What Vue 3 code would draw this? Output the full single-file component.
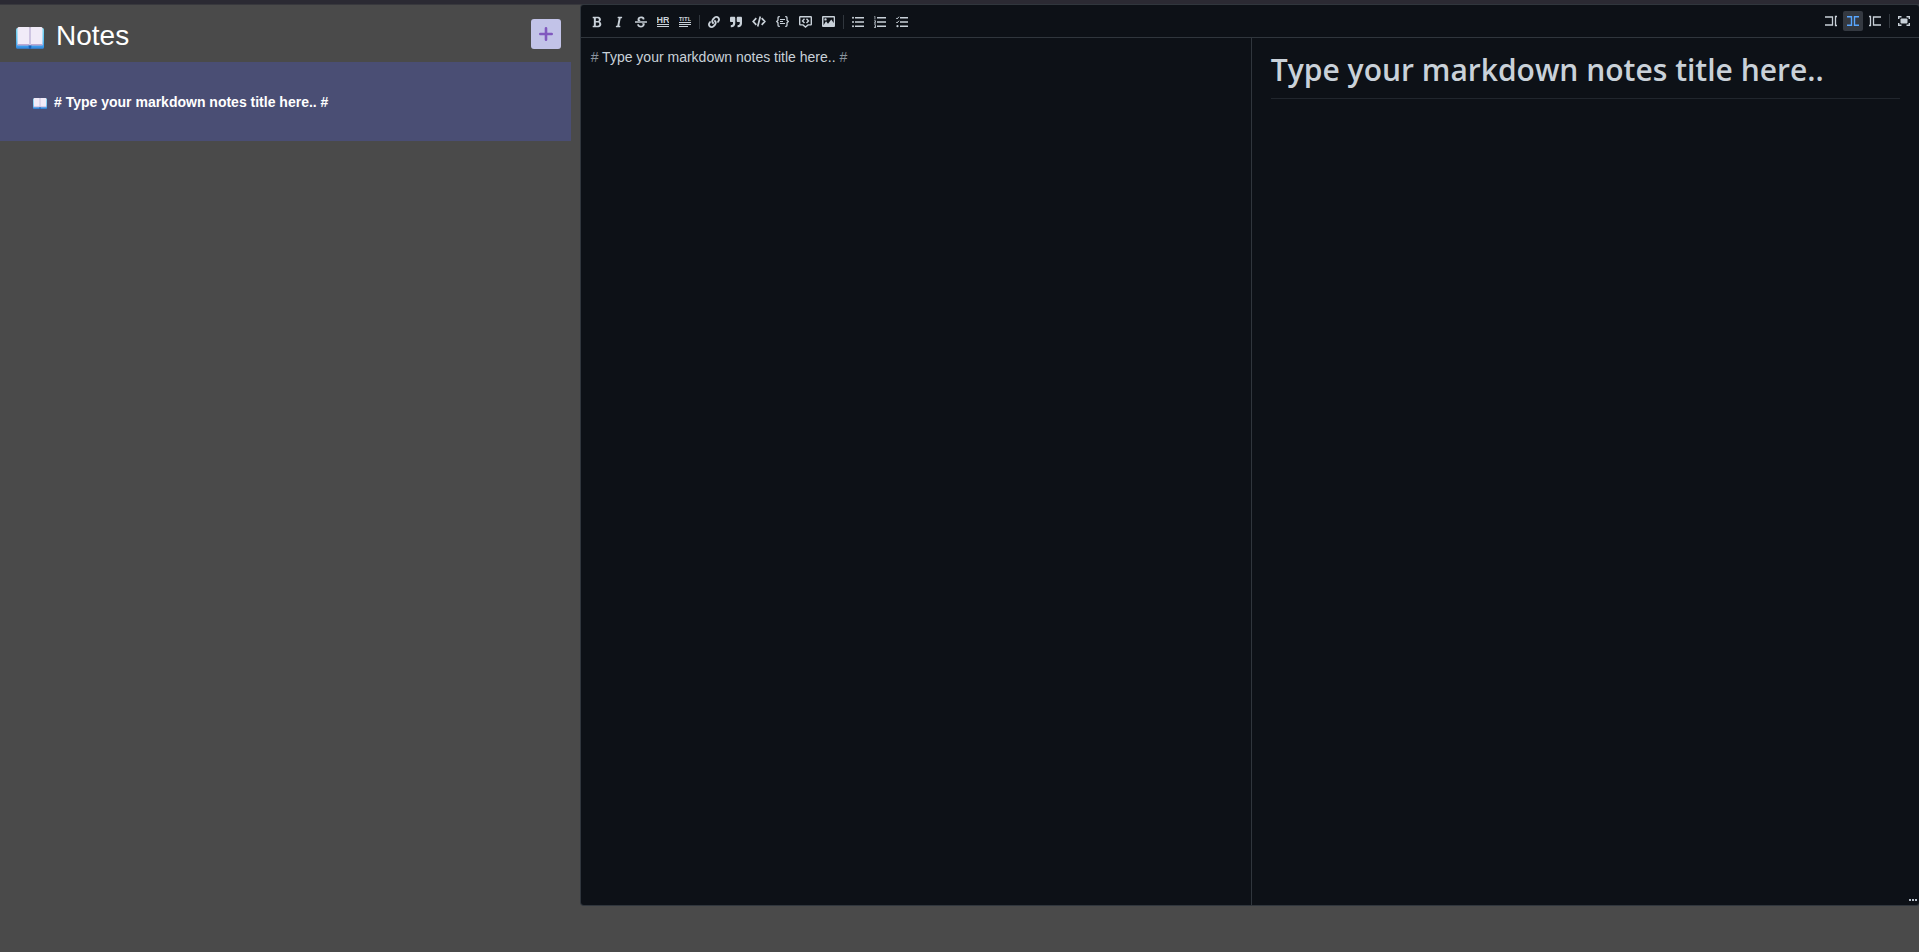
<script setup>
import { ref, computed } from 'vue'

const notes = ref([{ id: 1, body: '# Type your markdown notes title here.. #' }])
const currentId = ref(1)
const mode = ref('live')
const current = computed(() => notes.value.find((n) => n.id === currentId.value))
const heading = computed(() => current.value.body.replace(/^#\s*|\s*#\s*$/g, ''))
const parts = computed(() => current.value.body.split(/(#)/).filter((p) => p !== ''))

function addNote() {
  const id = notes.value.length + 1
  notes.value.push({ id, body: '# Type your markdown notes title here.. #' })
  currentId.value = id
}

const bold = 'M304.793 243.891c33.639-18.537 53.657-54.16 53.657-95.693 0-48.236-26.25-87.626-68.626-104.179C265.138 34.01 240.849 32 209.661 32H24c-8.837 0-16 7.163-16 16v33.049c0 8.837 7.163 16 16 16h33.113v318.53H24c-8.837 0-16 7.163-16 16V464c0 8.837 7.163 16 16 16h195.69c24.203 0 44.834-1.289 66.866-7.584C337.52 457.193 376 410.647 376 350.014c0-52.168-26.573-91.684-71.207-106.123zM142.217 100.809h67.444c16.294 0 27.536 2.019 37.525 6.717 15.828 8.479 24.906 26.502 24.906 49.446 0 35.029-20.32 56.79-53.029 56.79h-76.846V100.809zm112.642 305.475c-10.14 4.056-22.677 4.907-31.409 4.907h-81.233V281.943h84.367c39.645 0 63.057 25.38 63.057 63.057.001 28.425-13.66 52.483-34.782 61.284z'
const italic = 'M204.758 416h-33.849l62.092-320h40.725a16 16 0 0 0 15.704-12.937l6.242-32C297.599 41.184 290.034 32 279.968 32H120.235a16 16 0 0 0-15.704 12.937l-6.242 32C96.362 86.816 103.927 96 113.993 96h33.846l-62.09 320H46.278a16 16 0 0 0-15.704 12.935l-6.245 32C22.402 470.815 29.967 480 40.034 480h158.479a16 16 0 0 0 15.704-12.935l6.245-32c1.927-9.88-5.638-19.065-15.704-19.065z'
const strike = 'M496 288H16c-8.837 0-16-7.163-16-16v-32c0-8.837 7.163-16 16-16h480c8.837 0 16 7.163 16 16v32c0 8.837-7.163 16-16 16zm-214.666 16c27.258 12.937 46.524 28.683 46.524 56.243 0 33.108-28.977 53.676-75.621 53.676-32.325 0-76.874-12.08-76.874-44.271V368c0-8.837-7.164-16-16-16H113.75c-8.836 0-16 7.163-16 16v19.204c0 66.845 77.717 101.82 154.487 101.82 88.578 0 162.013-45.438 162.013-134.424 0-19.815-3.618-36.417-10.143-50.6H281.334zm-30.952-96c-32.422-13.505-56.836-28.946-56.836-59.683 0-33.92 30.901-47.406 64.962-47.406 42.647 0 64.962 16.593 64.962 32.985V136c0 8.837 7.163 16 16 16h45.613c8.836 0 16-7.163 16-16v-30.318c0-52.438-71.725-79.875-142.575-79.875-85.203 0-150.726 40.972-150.726 125.646 0 22.71 4.665 41.176 12.777 56.547h129.823z'
const link = 'M326.612 185.391c59.747 59.809 58.927 155.698.36 214.59-.11.12-.24.25-.36.37l-67.2 67.2c-59.27 59.27-155.699 59.262-214.96 0-59.27-59.26-59.27-155.7 0-214.96l37.106-37.106c9.84-9.84 26.786-3.3 27.294 10.606.648 17.722 3.826 35.527 9.69 52.721 1.986 5.822.567 12.262-3.783 16.612l-13.087 13.087c-28.026 28.026-28.905 73.66-1.155 101.96 28.024 28.579 74.086 28.749 102.325.51l67.2-67.19c28.191-28.191 28.073-73.757 0-101.83-3.701-3.694-7.429-6.564-10.341-8.569a16.037 16.037 0 0 1-6.947-12.606c-.396-10.567 3.348-21.456 11.698-29.806l21.054-21.055c5.521-5.521 14.182-6.199 20.584-1.731a152.482 152.482 0 0 1 20.522 17.197zM467.547 44.449c-59.261-59.262-155.69-59.27-214.96 0l-67.2 67.2c-.12.12-.25.25-.36.37-58.566 58.892-59.387 154.781.36 214.59a152.454 152.454 0 0 0 20.521 17.196c6.402 4.468 15.064 3.789 20.584-1.731l21.054-21.055c8.35-8.35 12.094-19.239 11.698-29.806a16.037 16.037 0 0 0-6.947-12.606c-2.912-2.005-6.64-4.875-10.341-8.569-28.073-28.073-28.191-73.639 0-101.83l67.2-67.19c28.239-28.239 74.3-28.069 102.325.51 27.75 28.3 26.872 73.934-1.155 101.96l-13.087 13.087c-4.35 4.35-5.769 10.79-3.783 16.612 5.864 17.194 9.042 34.999 9.69 52.721.509 13.906 17.454 20.446 27.294 10.606l37.106-37.106c59.271-59.259 59.271-155.699.001-214.959z'
const quote = 'M464 32H336c-26.5 0-48 21.5-48 48v128c0 26.5 21.5 48 48 48h80v64c0 35.3-28.7 64-64 64h-8c-13.3 0-24 10.7-24 24v48c0 13.3 10.7 24 24 24h8c88.4 0 160-71.6 160-160V80c0-26.5-21.5-48-48-48zm-288 0H48C21.5 32 0 53.5 0 80v128c0 26.5 21.5 48 48 48h80v64c0 35.3-28.7 64-64 64h-8c-13.3 0-24 10.7-24 24v48c0 13.3 10.7 24 24 24h8c88.4 0 160-71.6 160-160V80c0-26.5-21.5-48-48-48z'
</script>

<template>
  <div class="app">
    <svg class="defs" width="0" height="0" aria-hidden="true">
      <defs>
        <linearGradient id="cover" x1="0" y1="0" x2="0" y2="1">
          <stop offset="0" stop-color="#7fd6ee" />
          <stop offset="0.6" stop-color="#5cc0f2" />
          <stop offset="1" stop-color="#2f8fe8" />
        </linearGradient>
        <symbol id="book" viewBox="0 0 28 22">
          <rect x="0" y="1" width="28" height="20.5" rx="1.5" fill="url(#cover)" />
          <rect x="0.5" y="20.5" width="27" height="1" rx="0.5" fill="#3a86dc" />
          <path d="M1.5 1.2Q1.5 0 3 0H12.5Q14 0 14 1.2Q14 0 15.500 0H25Q26.500 0 26.500 1.200V18H1.500z" fill="#f1ebf8" />
          <path d="M1.500 17H26.500V18.600H1.500z" fill="#bcaad4" />
          <path d="M13 .5H15V18H13z" fill="#d8cfe8" />
          <path d="M13.700 .5H14.300V18H13.700z" fill="#b9add2" />
          <path d="M12.500 18.500H15.500L15 21.800H13z" fill="#1d62b8" />
        </symbol>
      </defs>
    </svg>

    <div class="strip"></div>
    <div class="workspace">
      <aside class="sidebar">
        <header class="sidebar-head">
          <svg class="book-large" aria-hidden="true"><use href="#book" /></svg>
          <h1 class="brand">Notes</h1>
          <button class="add" type="button" aria-label="Add note" @click="addNote">
            <svg width="14" height="14" viewBox="0 0 14 14"><path d="M7 1.300V12.700M1.300 7H12.700" stroke="#8058bf" stroke-width="2.600" stroke-linecap="round" /></svg>
          </button>
        </header>
        <nav class="note-list" aria-label="Notes">
          <button
            v-for="n in notes"
            :key="n.id"
            type="button"
            class="note"
            :class="{ active: n.id === currentId }"
            @click="currentId = n.id"
          >
            <svg class="book-small" aria-hidden="true"><use href="#book" /></svg>
            <span class="note-title">{{ n.body }}</span>
          </button>
        </nav>
      </aside>

      <main class="editor">
        <div class="toolbar">
          <div class="tools">
            <button type="button" class="tool" aria-label="Bold"><svg width="12" height="12" viewBox="0 0 384 512"><path fill="currentColor" :d="bold" /></svg></button>
            <button type="button" class="tool" aria-label="Italic"><svg width="12" height="12" viewBox="0 0 320 512"><path fill="currentColor" :d="italic" /></svg></button>
            <button type="button" class="tool" aria-label="Strikethrough"><svg width="12" height="12" viewBox="0 0 512 512"><path fill="currentColor" :d="strike" /></svg></button>
            <button type="button" class="tool" aria-label="Horizontal rule">
              <svg class="lettered" width="12" height="12" viewBox="0 0 12 12"><text x="6" y="7" text-anchor="middle" font-size="9" font-weight="700">HR</text><path fill="currentColor" d="M0 8h12v1H0zM0 10h12v1H0z" /></svg>
            </button>
            <button type="button" class="tool" aria-label="Title">
              <svg class="lettered" width="12" height="12" viewBox="0 0 12 12"><text x="6" y="5" text-anchor="middle" font-size="6" font-weight="700">TITL</text><path fill="currentColor" d="M0 6h12v1H0zM0 8h12v1H0zM0 10h9v1H0z" /></svg>
            </button>
            <i class="divider"></i>
            <button type="button" class="tool" aria-label="Link"><svg width="12" height="12" viewBox="0 0 512 512"><path fill="currentColor" :d="link" /></svg></button>
            <button type="button" class="tool" aria-label="Quote"><svg width="12" height="12" viewBox="0 0 512 512"><path fill="currentColor" :d="quote" /></svg></button>
            <button type="button" class="tool" aria-label="Code">
              <svg width="14" height="12" viewBox="0 0 14 12" fill="none" stroke="currentColor" stroke-width="1.700"><path d="M4.300 2.200L1.200 5.500L4.300 8.800M9.700 2.200L12.800 5.500L9.700 8.800M8.300 .500L5.700 10.500" /></svg>
            </button>
            <button type="button" class="tool" aria-label="Code block">
              <svg width="13" height="12" viewBox="0 0 13 12" fill="none" stroke="currentColor" stroke-width="1.300"><path d="M3.800 .700H3Q2 .700 2 1.700V4.300L.700 5.500L2 6.700V9.300Q2 10.300 3 10.300H3.800M9.200 .700H10Q11 .700 11 1.700V4.300L12.300 5.500L11 6.700V9.300Q11 10.300 10 10.300H9.200" /><path stroke-width="1" d="M4 3.500H9M4 5.500H7M4 7.500H9" /></svg>
            </button>
            <button type="button" class="tool" aria-label="Comment">
              <svg width="13" height="12" viewBox="0 0 13 12" fill="none" stroke="currentColor" stroke-width="1.400"><path d="M1.200 .700H11.800Q12.300 .700 12.300 1.200V8.300Q12.300 8.900 11.800 8.900H9L6.500 11L4 8.900H1.200Q.700 8.900 .700 8.300V1.200Q.700 .700 1.200 .700zM5.500 2.800L3.500 4.900L5.500 7M7.500 2.800L9.500 4.900L7.500 7" /></svg>
            </button>
            <button type="button" class="tool" aria-label="Image">
              <svg width="13" height="12" viewBox="0 0 13 12"><path fill="currentColor" fill-rule="evenodd" d="M1 0H12Q13 0 13 1V10Q13 11 12 11H1Q0 11 0 10V1Q0 0 1 0zM1.500 9.300L4 5.200L6 7.700L9.300 3.600L11.700 7V1.400H1.500zM3.500 2.200a1.200 1.200 0 1 1 0 2.400a1.200 1.200 0 1 1 0-2.400z" /></svg>
            </button>
            <i class="divider"></i>
            <button type="button" class="tool" aria-label="Bulleted list">
              <svg width="12" height="12" viewBox="0 0 12 12" fill="currentColor"><path d="M3 1h9v1.500H3zM3 5.200h9v1.500H3zM3 9.500h9v1.500H3z" /><circle cx="1" cy="1.700" r="1" /><circle cx="1" cy="6" r="1" /><circle cx="1" cy="10.200" r="1" /></svg>
            </button>
            <button type="button" class="tool" aria-label="Numbered list">
              <svg width="12" height="12" viewBox="0 0 12 12" fill="currentColor"><path d="M3 1h9v1.500H3zM3 5.200h9v1.500H3zM3 9.500h9v1.500H3z" /><path d="M.300 .300H1.300V3.500H.600V1H.300zM0 4.600H2V6.200L.900 7H2V7.600H0V6.700L1.300 5.800V5.200H0zM0 8.500H2V11.700H0V11.100H1.300V10.400H.500V9.800H1.300V9.100H0z" /></svg>
            </button>
            <button type="button" class="tool" aria-label="Checklist">
              <svg width="12" height="12" viewBox="0 0 12 12"><path fill="currentColor" d="M4 1h8v1.500H4zM4 5.200h8v1.500H4zM4 9.500h8v1.500H4z" /><path d="M0 1.800L1.100 2.900L3 .700M0 5.800L1.100 6.900L3 4.700" fill="none" stroke="currentColor" stroke-width="1" /><circle cx="1.500" cy="10.200" r="1.100" fill="currentColor" /></svg>
            </button>
          </div>
          <div class="tools views">
            <button type="button" class="tool" :class="{ on: mode === 'edit' }" aria-label="Edit view" @click="mode = 'edit'">
              <svg width="12" height="12" viewBox="0 0 12 12" fill="none" stroke="currentColor"><path d="M0 2H7.500V10H0M12 1.500H10.500V10.500H12" stroke-width="1.300" /></svg>
            </button>
            <button type="button" class="tool" :class="{ on: mode === 'live' }" aria-label="Live view" @click="mode = 'live'">
              <svg width="12" height="12" viewBox="0 0 12 12" fill="none" stroke="currentColor"><path d="M0 1.700H4.500V10.300H0M12 1.700H7.500V10.300H12" stroke-width="1.400" /></svg>
            </button>
            <button type="button" class="tool" :class="{ on: mode === 'preview' }" aria-label="Preview" @click="mode = 'preview'">
              <svg width="12" height="12" viewBox="0 0 12 12" fill="none" stroke="currentColor"><path d="M12 2H4.500V10H12M0 1.500H1.500V10.500H0" stroke-width="1.300" /></svg>
            </button>
            <i class="divider"></i>
            <button type="button" class="tool" aria-label="Full screen">
              <svg width="12" height="12" viewBox="0 0 12 12"><path d="M.700 4V1.700H3.500M8.500 1.700H11.300V4M11.300 8V10.300H8.500M3.500 10.300H.700V8" fill="none" stroke="currentColor" stroke-width="1.400" /><rect x="2.500" y="3.500" width="7" height="5" rx="1" fill="currentColor" /></svg>
            </button>
          </div>
        </div>
        <div class="panes">
          <section v-if="mode !== 'preview'" class="source">
            <pre class="highlight" aria-hidden="true"><span v-for="(p, i) in parts" :key="i" :class="{ mark: p === '#' }">{{ p }}</span></pre>
            <textarea v-model="current.body" class="input" aria-label="Markdown source" spellcheck="false"></textarea>
          </section>
          <article v-if="mode !== 'edit'" class="preview">
            <h1 class="heading">{{ heading }}</h1>
          </article>
        </div>
        <svg class="grip" width="8" height="2" viewBox="0 0 8 2" aria-hidden="true"><path d="M0 0h2v2H0zM3 0h2v2H3zM6 0h2v2H6z" fill="#b6bec8" /></svg>
      </main>
    </div>
  </div>
</template>

<style>
body {
  margin: 0;
  background: #4a4a4a;
}
</style>

<style scoped>
* {
  box-sizing: border-box;
}
.app {
  display: flex;
  flex-direction: column;
  min-height: 100vh;
  background: #4a4a4a;
  font-family: "Liberation Sans", Arial, sans-serif;
}
.defs {
  position: absolute;
}
.strip {
  height: 5px;
  background: #2b2a33;
  border-bottom: 1px solid #38383d;
}
.workspace {
  flex: 1;
  display: flex;
  gap: 10px;
  padding-bottom: 47px;
}
.sidebar {
  flex: 0 0 30%;
  margin-right: -5px;
  padding-right: 5px;
}
.sidebar-head {
  display: flex;
  align-items: center;
  height: 57px;
  padding: 0 10px 0 16px;
}
.book-large {
  width: 28px;
  height: 22px;
  margin-top: 8px;
}
.brand {
  flex: 1;
  margin: 4px 0 0 12px;
  color: #fff;
  font-size: 28px;
  font-weight: 400;
  line-height: 32px;
}
.add {
  display: flex;
  align-items: center;
  justify-content: center;
  width: 30px;
  height: 30px;
  padding: 0;
  border: 0;
  border-radius: 3px;
  background: #c2c3e8;
}
.note {
  display: flex;
  align-items: center;
  gap: 7px;
  width: 100%;
  height: 79px;
  padding: 0 33px;
  border: 0;
  background: transparent;
  color: #fff;
  font: 700 14px/20px "Liberation Sans", Arial, sans-serif;
  text-align: left;
}
.note.active {
  background: #4a4e74;
}
.book-small {
  width: 14px;
  height: 11px;
  margin-top: 3px;
}
.editor {
  position: relative;
  flex: 1;
  display: flex;
  flex-direction: column;
  min-width: 0;
  border-radius: 3px;
  background: #0d1117;
  box-shadow: 0 0 0 1px #30363d;
  color: #c9d1d9;
}
.toolbar {
  display: flex;
  justify-content: space-between;
  height: 33px;
  padding: 6px 4px 6px 5px;
  border-bottom: 1px solid #30363d;
}
.tools {
  display: flex;
  padding-top: 1px;
}
.tools.views {
  padding-top: 0;
}
.tool {
  display: flex;
  align-items: center;
  height: 20px;
  margin: 0 1px;
  padding: 4px;
  border: 0;
  border-radius: 2px;
  background: transparent;
  color: #c9d1d9;
}
.tool.on {
  background: #343941;
  color: #58a6ff;
}
.lettered text {
  fill: currentColor;
  font-family: "Liberation Sans", Arial, sans-serif;
}
.divider {
  width: 1px;
  height: 14px;
  margin: 3px 3px 0;
  background: #30363d;
}
.panes {
  flex: 1;
  display: flex;
}
.source {
  position: relative;
  flex: 1;
  min-width: 0;
}
.highlight,
.input {
  margin: 0;
  padding: 10px;
  font: 14px/18px "Liberation Sans", Arial, sans-serif;
  white-space: pre-wrap;
}
.mark {
  color: #8b949e;
}
.input {
  position: absolute;
  inset: 0;
  width: 100%;
  height: 100%;
  border: 0;
  outline: 0;
  resize: none;
  background: transparent;
  color: transparent;
  caret-color: #c9d1d9;
}
.preview {
  flex: 0 1 calc(50% - 1px);
  min-width: 0;
  padding: 10px 19px;
  border-left: 1px solid #30363d;
}
.heading {
  margin: 0;
  padding-bottom: 6px;
  border-bottom: 1px solid #21262d;
  font: 600 30px/44px "Open Sans", "Noto Sans", sans-serif;
}
.source + .preview {
  flex-grow: 0;
}
.preview:only-child {
  flex-grow: 1;
}
</style>
<style scoped>
.grip {
  position: absolute;
  right: 2px;
  bottom: 4px;
}
</style>
